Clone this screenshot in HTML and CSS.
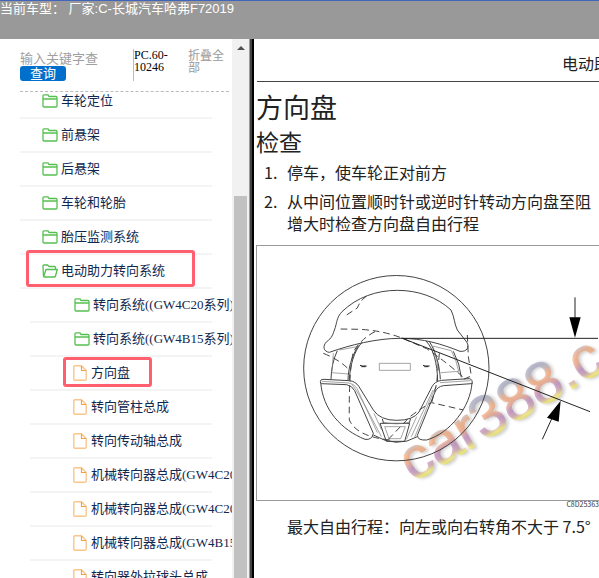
FILE: index.html
```html
<!DOCTYPE html>
<html lang="zh-CN">
<head>
<meta charset="utf-8">
<title>方向盘</title>
<link rel="stylesheet" href="styles.css">
</head>
<body>
<svg class="sprite" aria-hidden="true">
  <symbol id="folder" viewBox="0 0 16 14"><path d="M1 12V2Q1 .8 2 .8H6L7 2.500H14Q15 2.500 15 3.500V12Q15 13 14 13H2Q1 13 1 12ZM1 5H15" fill="none" stroke="#55c050" stroke-width="1.300"/></symbol>
  <symbol id="folder-open" viewBox="0 0 16 14"><path d="M1.500 13L1 2Q1 1 2 1H5.500L7 2.500H12.500Q13.500 2.500 13.500 3.500V5M1.500 13L4 5.500H15.300L13.500 12Q13.300 13 12.300 13H1.500" fill="none" stroke="#55c050" stroke-width="1.300"/></symbol>
  <symbol id="file" viewBox="0 0 14 16"><path d="M2 .8H8.500L13.200 5.500V14Q13.200 15.200 12 15.200H2Q.8 15.200 .8 14V2Q.8 .8 2 .8Z" fill="none" stroke="#fac68c" stroke-width="1.400"/><path d="M8.500 1V5.500H13" fill="none" stroke="#f5a040" stroke-width="1.200"/></symbol>
</svg>
<header class="topbar">当前车型： 厂家:C-长城汽车哈弗F72019</header>
<div class="layout">
  <aside class="sidebar">
    <div class="tree-pane">
      <div class="toolbar">
        <form class="search">
          <input class="search-input" type="text" placeholder="输入关键字查" aria-label="输入关键字查">
          <button class="search-button" type="button">查询</button>
        </form>
        <span class="code">PC.60-<br>10246</span>
        <button class="collapse" type="button">折叠全部</button>
      </div>
      <nav class="tree">
        <ul class="level">
          <li><a class="node" href="#"><svg class="folder"><use href="#folder"/></svg>车轮定位</a></li>
          <li><a class="node" href="#"><svg class="folder"><use href="#folder"/></svg>前悬架</a></li>
          <li><a class="node" href="#"><svg class="folder"><use href="#folder"/></svg>后悬架</a></li>
          <li><a class="node" href="#"><svg class="folder"><use href="#folder"/></svg>车轮和轮胎</a></li>
          <li><a class="node" href="#"><svg class="folder"><use href="#folder"/></svg>胎压监测系统</a></li>
          <li><a class="node marked" href="#"><svg class="folder"><use href="#folder-open"/></svg>电动助力转向系统</a>
            <ul class="level sub">
              <li><a class="node" href="#"><svg class="folder"><use href="#folder"/></svg>转向系统((GW4C20系列)</a></li>
              <li><a class="node" href="#"><svg class="folder"><use href="#folder"/></svg>转向系统((GW4B15系列)</a></li>
              <li><a class="node marked leaf" href="#"><svg class="file"><use href="#file"/></svg>方向盘</a></li>
              <li><a class="node" href="#"><svg class="file"><use href="#file"/></svg>转向管柱总成</a></li>
              <li><a class="node" href="#"><svg class="file"><use href="#file"/></svg>转向传动轴总成</a></li>
              <li><a class="node" href="#"><svg class="file"><use href="#file"/></svg>机械转向器总成(GW4C20</a></li>
              <li><a class="node" href="#"><svg class="file"><use href="#file"/></svg>机械转向器总成(GW4C20</a></li>
              <li><a class="node" href="#"><svg class="file"><use href="#file"/></svg>机械转向器总成(GW4B15</a></li>
              <li><a class="node" href="#"><svg class="file"><use href="#file"/></svg>转向器外拉球头总成</a></li>
            </ul>
          </li>
        </ul>
      </nav>
    </div>
    <div class="scrollbar" aria-hidden="true"><span class="arrow"></span><span class="thumb"></span></div>
  </aside>
  <main class="doc">
    <p class="running-head">电动助</p>
    <h1>方向盘</h1>
    <h2>检查</h2>
    <ol>
      <li>停车，使车轮正对前方</li>
      <li>从中间位置顺时针或逆时针转动方向盘至阻<br>增大时检查方向盘自由行程</li>
    </ol>
    <figure>
      <svg class="drawing" viewBox="21 18 1026 762" role="img" aria-label="方向盘自由行程">
        <defs>
          <linearGradient id="ink" gradientUnits="userSpaceOnUse" x1="0" y1="-130" x2="0" y2="5">
            <stop offset="0" stop-color="#8d94b8"/><stop offset=".2" stop-color="#a5a2b8"/>
            <stop offset=".38" stop-color="#fa9a5c"/><stop offset=".52" stop-color="#f0956c"/>
            <stop offset=".7" stop-color="#b070b4"/><stop offset=".82" stop-color="#c48a9c"/>
            <stop offset=".93" stop-color="#f6ec4c"/><stop offset="1" stop-color="#e8dc50"/>
          </linearGradient>
          <filter id="soft"><feGaussianBlur stdDeviation="4"/></filter>
        </defs>
        <g class="brand" transform="translate(490 728) rotate(-30.500)">
          <text class="shade" x="5" y="7" filter="url(#soft)">car388.c</text>
          <text class="tint" x="0" y="0">car388.c</text>
        </g>
        <g class="line">
          <circle cx="439" cy="384.500" r="278"/>
          <path d="M276 215C320 172 380 151 442 151C505 151 562 172 603 210C614 232 612 250 622 270L650 306C660 322 650 336 630 334C575 312 520 295 450 295C380 295 300 315 238 337C220 335 217 318 230 305C246 294 248 285 256 262C262 240 262 230 276 215Z"/>
          <path d="M337 306C310 335 300 380 298 420M325 317C304 350 295 385 294 420M538 304C560 340 569 380 571 418M528 303C550 325 562 370 563 424"/>
          <path d="M212 430Q208 417 222 418L298 422Q317 424 327 440L370 510Q390 541 440 541Q490 541 507 516L546 440Q554 424 575 421L658 416Q669 418 666 432"/>
          <path d="M214 431L290 434Q306 437 314 452L370 580Q366 601 345 598C275 570 218 510 212 426"/>
          <path d="M666 428C662 500 600 580 530 600Q503 602 502 586L555 456Q562 440 580 437L664 431"/>
          <path d="M262 332Q244 370 243 418M610 334Q630 372 634 412M370 585Q440 626 502 590M390 550H479L464 604H409ZM397 537L401 550M482 536L477 550"/>
        </g>
        <g class="thin">
          <path d="M216 424L297 429Q312 431 321 445L382 578M306 434Q322 450 394 590M500 530L469 598M549 450L484 590M560 440Q552 450 545 468L494 592M570 428L662 422M372 520L395 570M268 330L321 320M245 398L295 402M250 340L246 395M404 560H466L452 596H417ZM398 546Q440 557 480 546M548 318L604 332Q620 362 626 394L573 398M550 322L569 398M388 370H481V391H388Z"/>
          <path d="M330 376L337 378H350M334 380H347M519 376L526 378H539M523 380H535" class="mark"/>
        </g>
        <g class="dash">
          <path d="M350 168Q330 182 322 204L285 228M272 267L330 268Q400 272 455 294L530 326Q590 367 640 412M375 275Q335 295 310 335Q296 400 298 540Q320 590 420 600M652 285L655 350L664 408L640 418M220 340Q270 360 298 390M415 598L480 530Q520 500 545 488L640 510M568 340L560 430L545 488"/>
        </g>
        <path class="axis" d="M455 295H1044"/>
        <path class="axis" d="M455 294L1020 515M975 172V240M877 598L908 530"/>
        <path d="M958 232H992L975 293ZM932 482L891 533L926 545Z"/>
      </svg>
      <figcaption>C8D25363</figcaption>
    </figure>
    <p class="note">最大自由行程：向左或向右转角不大于 7.5°</p>
  </main>
</div>
</body>
</html>
```
FILE: styles.css
```css
* { box-sizing: border-box; }
body {
  margin: 0;
  height: 100vh;
  display: flex;
  flex-direction: column;
  overflow: hidden;
  background: #fff;
}
ul, ol { list-style: none; margin: 0; padding: 0; }
h1, h2, p, figure { margin: 0; font-weight: 400; }
button, input { border: 0; padding: 0; background: none; font: inherit; }
.sprite { position: absolute; width: 0; height: 0; }

.topbar {
  flex: none;
  height: 39px;
  border-top: 1px solid #4265bb;
  background: #999;
  color: #fff;
  font: 13px/15px "Liberation Sans", "Noto Sans CJK SC", sans-serif;
  white-space: pre;
}
.layout { flex: 1; display: flex; min-height: 0; }

.sidebar {
  flex: none;
  display: flex;
  width: 254px;
  border-right: 2px solid #000;
  box-shadow: inset -2px 0 #444, inset -3px 0 #999;
  font: 13px/32px "Liberation Serif", "Noto Sans CJK SC", serif;
}
.tree-pane { width: 232px; display: flex; flex-direction: column; overflow: hidden; }
.toolbar {
  flex: none;
  display: flex;
  height: 53px;
  margin: 0 3px 0 20px;
  padding-top: 10px;
  border-bottom: 1px dashed #bbb;
  position: relative;
  z-index: 1;
  background: #fff;
}
.search { width: 114px; height: 32px; border-right: 1px solid #bbb; display: flex; flex-direction: column; align-items: flex-start; }
.search-input { width: 100px; height: 17px; padding-top: 2px; line-height: 15px; }
.search-input::placeholder { color: #a0a0a0; }
.search-button { flex: none; width: 46px; height: 15px; border-radius: 3px; background: #0070cc; color: #fff; line-height: 15px; }
.code { width: 54px; font-size: 12px; line-height: 12px; }
.collapse { width: 37px; height: 26px; color: #999; font-size: 12px; line-height: 12px; text-align: left; }

.tree { flex: 1; min-height: 0; overflow: hidden; }
.tree > .level { margin: -7px 20px 0; }
.node {
  display: flex;
  align-items: center;
  height: 34px;
  padding-left: 22px;
  border-bottom: 2px solid #f4f4f4;
  color: #10284f;
  text-decoration: none;
  white-space: nowrap;
  position: relative;
}
.sub { margin-left: 10px; }
.sub .node { padding-left: 43px; }
.node svg { flex: none; }
.folder { width: 16px; height: 14px; margin-right: 3px; }
.sub .folder { margin-left: 1px; }
.file { width: 14px; height: 16px; margin-right: 4px; }
.marked::after {
  content: "";
  position: absolute;
  inset: -5px 17px 0 6px;
  border: 3px solid #ff5f6e;
  border-radius: 3px;
}
.leaf::after { inset: 0 60px 2px 33px; }

.scrollbar { width: 17px; background: #f1f1f1; display: flex; flex-direction: column; align-items: center; }
.arrow { margin-top: 7px; border: 4px solid transparent; border-top: 0; border-bottom-color: #505050; }
.thumb { flex: 1; width: 13px; margin-top: 146px; background: #c1c1c1; }

.doc {
  flex: 1;
  min-width: 0;
  overflow: hidden;
  padding-left: 2px;
  color: #222;
  font: 16px/22px "Noto Sans CJK SC", sans-serif;
  white-space: nowrap;
}
.running-head { height: 43px; margin-left: 1px; padding: 13px 0 0 305px; border-bottom: 1px solid #444; }
h1 { padding-top: 7px; font-size: 27px; line-height: 36px; }
h2 { font-size: 23px; line-height: 32px; }
ol { counter-reset: step; padding-top: 4px; }
ol li { display: flex; margin-bottom: 7px; counter-increment: step; }
ol li::before { content: counter(step) "."; width: 23px; margin-left: 8px; }
ol li:last-child { margin-bottom: 11px; }
.drawing { display: block; width: 343px; border: 1px solid #999; border-right: 0; }
figcaption { height: 8px; text-align: right; font-size: 7px; line-height: 6px; color: #333; }
.note { padding: 6px 0 0 31px; }

.line, .thin, .dash, .axis { fill: none; stroke: #444; stroke-width: 3; }
.thin { stroke: #777; stroke-width: 2; }
.mark { stroke: #222; stroke-width: 3; }
.dash { stroke-dasharray: 20 12; }
.axis { stroke: #222; }
.brand { font: 176px "Liberation Sans", sans-serif; }
.tint { fill: url(#ink); stroke: url(#ink); stroke-width: 3; opacity: .6; }
.shade { fill: #999; stroke: #999; stroke-width: 4; opacity: .45; }
```
